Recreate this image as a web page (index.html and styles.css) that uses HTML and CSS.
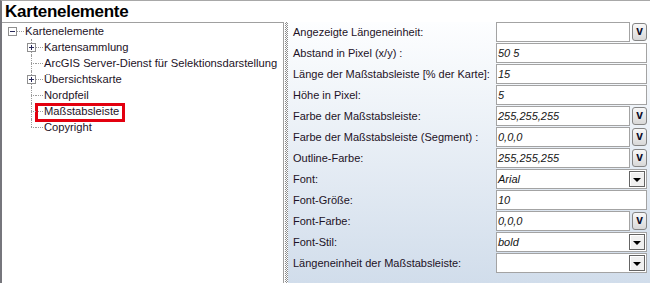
FILE: index.html
```html
<!DOCTYPE html>
<html lang="de">
<head>
<meta charset="utf-8">
<title>Kartenelemente</title>
<link rel="stylesheet" href="styles.css">
</head>
<body>
<div class="app">
  <div class="title">Kartenelemente</div>
  <div class="main">
    <div class="tree">
      <div class="node root">
        <span class="exp"><svg width="9" height="9" viewBox="0 0 9 9"><rect x="0.5" y="0.5" width="8" height="8" fill="#fff" stroke="#8f8f8f"/><path d="M2 4.5h5" stroke="#2a2a5a"/></svg></span>
        <span class="conn"></span>
        <span class="lbl">Kartenelemente</span>
      </div>
      <div class="children">
        <div class="node child">
          <span class="exp"><svg width="9" height="9" viewBox="0 0 9 9"><rect x="0.5" y="0.5" width="8" height="8" fill="#fff" stroke="#8f8f8f"/><path d="M2 4.5h5M4.5 2v5" stroke="#2a2a5a"/></svg></span>
          <span class="conn"></span>
          <span class="lbl">Kartensammlung</span>
        </div>
        <div class="node child">
          <span class="exp"></span>
          <span class="conn"></span>
          <span class="lbl">ArcGIS Server-Dienst für Selektionsdarstellung</span>
        </div>
        <div class="node child">
          <span class="exp"><svg width="9" height="9" viewBox="0 0 9 9"><rect x="0.5" y="0.5" width="8" height="8" fill="#fff" stroke="#8f8f8f"/><path d="M2 4.5h5M4.5 2v5" stroke="#2a2a5a"/></svg></span>
          <span class="conn"></span>
          <span class="lbl">Übersichtskarte</span>
        </div>
        <div class="node child">
          <span class="exp"></span>
          <span class="conn"></span>
          <span class="lbl">Nordpfeil</span>
        </div>
        <div class="node child">
          <span class="exp"></span>
          <span class="conn"></span>
          <span class="lbl marked">Maßstabsleiste</span>
        </div>
        <div class="node child last">
          <span class="exp"></span>
          <span class="conn"></span>
          <span class="lbl">Copyright</span>
        </div>
      </div>
    </div>
    <div class="splitter"></div>
    <div class="props">
      <div class="row"><div class="label">Angezeigte Längeneinheit:</div><div class="value"><div class="field short"></div><div class="vbtn">v</div></div></div>
      <div class="row"><div class="label">Abstand in Pixel (x/y) :</div><div class="value"><div class="field">50 5</div></div></div>
      <div class="row"><div class="label">Länge der Maßstabsleiste [% der Karte]:</div><div class="value"><div class="field">15</div></div></div>
      <div class="row"><div class="label">Höhe in Pixel:</div><div class="value"><div class="field">5</div></div></div>
      <div class="row"><div class="label">Farbe der Maßstabsleiste:</div><div class="value"><div class="field short">255,255,255</div><div class="vbtn">v</div></div></div>
      <div class="row"><div class="label">Farbe der Maßstabsleiste (Segment) :</div><div class="value"><div class="field short">0,0,0</div><div class="vbtn">v</div></div></div>
      <div class="row"><div class="label">Outline-Farbe:</div><div class="value"><div class="field short">255,255,255</div><div class="vbtn">v</div></div></div>
      <div class="row"><div class="label">Font:</div><div class="value"><div class="field combo"><span class="ctext">Arial</span><span class="dbtn"><span class="tri"></span></span></div></div></div>
      <div class="row"><div class="label">Font-Größe:</div><div class="value"><div class="field">10</div></div></div>
      <div class="row"><div class="label">Font-Farbe:</div><div class="value"><div class="field short">0,0,0</div><div class="vbtn">v</div></div></div>
      <div class="row"><div class="label">Font-Stil:</div><div class="value"><div class="field combo"><span class="ctext">bold</span><span class="dbtn"><span class="tri"></span></span></div></div></div>
      <div class="row"><div class="label">Längeneinheit der Maßstabsleiste:</div><div class="value"><div class="field combo"><span class="ctext"></span><span class="dbtn"><span class="tri"></span></span></div></div></div>
    </div>
  </div>
</div>
</body>
</html>
```
FILE: styles.css
```css
* { box-sizing: border-box; }
html, body { margin: 0; padding: 0; }
body {
  width: 650px;
  height: 283px;
  overflow: hidden;
  background: #fff;
  font-family: "Liberation Sans", Arial, sans-serif;
}
.app {
  height: 283px;
  border-left: 2px solid #76767c;
  border-top: 1px solid #a8a8a8;
  display: flex;
  flex-direction: column;
}
.title {
  height: 21px;
  line-height: 21px;
  padding-left: 3px;
  font-size: 17px;
  font-weight: bold;
  letter-spacing: -0.3px;
  color: #000;
}
.main {
  flex: 1;
  display: flex;
  min-height: 0;
}
.tree {
  width: 282px;
  border-top: 1px solid #a0a0a0;
  border-right: 1px solid #a0a0a0;
  background: #fff;
  font-size: 11.2px;
  color: #1d1226;
}
.node {
  height: 16px;
  display: flex;
  align-items: center;
  position: relative;
}
.root { padding-left: 6px; }
.exp {
  width: 9px;
  height: 9px;
  flex: none;
  display: flex;
  position: relative;
  z-index: 1;
}
.exp svg { display: block; }
.exp:empty::after {
  content: "";
  position: absolute;
  left: 4px;
  right: 0;
  top: 4px;
  border-top: 1px dotted #9a9a9a;
}
.conn {
  width: 7px;
  height: 0;
  border-top: 1px dotted #9a9a9a;
  flex: none;
}
.lbl {
  white-space: nowrap;
  line-height: 16px;
  margin-left: 1px;
}
.child { padding-left: 25px; }
.child::before {
  content: "";
  position: absolute;
  left: 29px;
  top: 0;
  bottom: 0;
  border-left: 1px dotted #9a9a9a;
}
.child.last::before { bottom: 8px; }
.marked { position: relative; }
.marked::after {
  content: "";
  position: absolute;
  left: -9px;
  right: -6px;
  top: 0;
  bottom: -3px;
  border: 3px solid #e3000f;
}
.splitter {
  width: 3px;
  margin-left: 1px;
  background: repeating-conic-gradient(#8c8c8c 0 25%, #ffffff 0 50%) 0 0 / 2px 2px;
}
.props {
  flex: 1;
  background: linear-gradient(#fdfeff, #d1ddeb);
  font-size: 11px;
}
.row {
  height: 21px;
  display: grid;
  grid-template-columns: 208px 1fr;
}
.label {
  padding-left: 5px;
  line-height: 21px;
  white-space: nowrap;
  color: #1d1226;
}
.value {
  display: flex;
  align-items: flex-start;
  gap: 2px;
}
.field {
  width: 151px;
  height: 20px;
  border: 1px solid #a3a3a3;
  background: #fff;
  font-style: italic;
  line-height: 18px;
  padding-left: 1px;
  color: #141414;
  white-space: nowrap;
}
.field.short { width: 134px; }
.vbtn {
  width: 15px;
  height: 18px;
  margin-top: 1px;
  border: 1px solid #858585;
  border-radius: 3px;
  background: linear-gradient(#f8f8f8, #d8d8d8);
  font-weight: bold;
  font-size: 12px;
  line-height: 15px;
  text-align: center;
  color: #0c0c2a;
}
.combo {
  display: flex;
  align-items: center;
  justify-content: space-between;
  padding-right: 1px;
}
.ctext { flex: 1; }
.dbtn {
  width: 16px;
  height: 16px;
  border: 1px solid #646464;
  background: #f0f0f0;
  box-shadow: inset 1px 1px 0 #fff;
  display: flex;
  align-items: center;
  justify-content: center;
}
.tri {
  width: 0;
  height: 0;
  border-left: 4px solid transparent;
  border-right: 4px solid transparent;
  border-top: 4px solid #000;
  margin-top: 1px;
}
```
